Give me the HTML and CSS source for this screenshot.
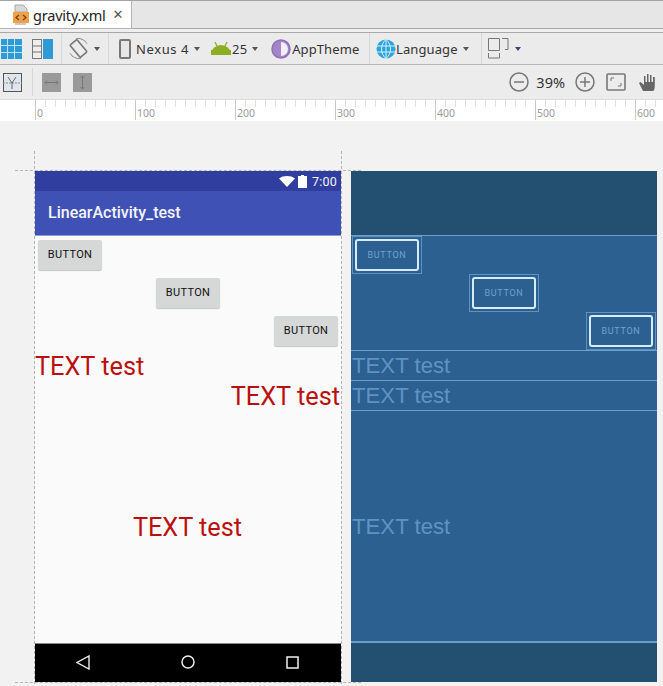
FILE: index.html
```html
<!DOCTYPE html>
<html lang="en">
<head>
<meta charset="utf-8">
<title>gravity.xml</title>
<link rel="stylesheet" href="styles.css">
</head>
<body>
<div class="tabstrip">
  <div class="tab">
    <svg class="ic-file" width="17" height="22" viewBox="0 0 17 22"><path d="M3 1h8l4 4v3H3z" fill="#d8d8d8" stroke="#a8a8a8"/><rect x="1" y="8" width="16" height="11" fill="#eda24a"/><path d="M3 19h11v2H3z" fill="#c9c9c9"/><path d="M7 11l-3 2.500 3 2.500M11 11l3 2.500-3 2.500" fill="none" stroke="#7a3d00" stroke-width="1.200"/></svg>
    <span class="tabname">gravity.xml</span>
    <span class="tabclose">✕</span>
  </div>
</div>
<div class="bar bar1">
  <div class="group g-a">
    <svg width="21" height="20" viewBox="0 0 21 20"><rect width="21" height="20" fill="#2e9bd6"/><path d="M6.500 0v20M13.500 0v20M0 6.500h21M0 13.500h21" stroke="#bfe3f6"/></svg>
    <svg width="21" height="20" viewBox="0 0 21 20"><rect x=".5" y=".5" width="9" height="19" fill="#eee" stroke="#777"/><path d="M0 7h10M0 13h10" stroke="#777"/><rect x="11" width="10" height="20" fill="#2e9bd6"/></svg>
  </div>
  <div class="group g-b">
    <svg width="21" height="21" viewBox="0 0 21 21"><rect x="6" y="2.500" width="9" height="16" rx="1" transform="rotate(-40 10.500 10.500)" fill="#ececec" stroke="#777" stroke-width="1.600"/><path d="M8 .7a10 10 0 0 1 11 5M13 20.300a10 10 0 0 1-11-5" fill="none" stroke="#888"/></svg>
    <i class="caret"></i>
  </div>
  <div class="group g-c">
    <svg width="12" height="20" viewBox="0 0 12 20"><rect x="1" y="1" width="10" height="18" rx="1" fill="#e6e6e6" stroke="#777" stroke-width="2"/></svg>
    <span class="lbl nexus">Nexus 4</span><i class="caret"></i>
    <svg class="droid" width="20" height="13" viewBox="0 0 20 13"><path d="M0 12a10 9 0 0 1 20 0z" fill="#8cae22"/><path d="M4 0l2 4M16 0l-2 4" stroke="#8cae22" stroke-width="1.200"/><rect y="8" width="20" height="5" fill="#8cae22"/></svg>
    <span class="lbl n25">25</span><i class="caret"></i>
    <svg class="theme" width="20" height="20" viewBox="0 0 20 20"><circle cx="10" cy="10" r="9" fill="#a585c9" stroke="#8d72b5" stroke-width="1.500"/><path d="M10 3a7 7 0 0 1 0 14z" fill="#f3eef8"/></svg>
    <span class="lbl">AppTheme</span>
  </div>
  <div class="group g-d">
    <svg width="20" height="20" viewBox="0 0 20 20"><circle cx="10" cy="10" r="9.500" fill="#2ba4dc"/><path d="M0 7h20M0 13h20M10 0v20M10 .5c-6 5-6 14 0 19M10 .5c6 5 6 14 0 19" fill="none" stroke="#d6f0fb"/></svg>
    <span class="lbl">Language</span><i class="caret"></i>
  </div>
  <div class="group g-e">
    <svg width="23" height="21" viewBox="0 0 23 21"><path d="M.5.500h11v12H.5zM14 .5h6v11h-3M.5 15v5h11v-5" fill="none" stroke="#777"/></svg>
    <i class="caret caret-dark"></i>
  </div>
</div>
<div class="bar bar2">
  <div class="tool-left">
    <svg class="t-box" width="19" height="19" viewBox="0 0 19 19"><rect x=".5" y=".5" width="18" height="18" fill="#dfe6ee" stroke="#555"/><path d="M0 10h19" stroke="#888" stroke-dasharray="2 1"/><path d="M5 4l4 6 4-6M9 10v6" fill="none" stroke="#666"/></svg>
    <span class="sep"></span>
    <svg width="19" height="19" viewBox="0 0 19 19"><rect width="19" height="19" fill="#9a9a9a"/><path d="M3 9.500h13M5 7.500l-2 2 2 2M14 7.500l2 2-2 2" fill="none" stroke="#777"/></svg>
    <svg width="19" height="19" viewBox="0 0 19 19"><rect width="19" height="19" fill="#9a9a9a"/><path d="M9.500 3v13M7.500 5l2-2 2 2M7.500 14l2 2 2-2" fill="none" stroke="#777"/></svg>
  </div>
  <div class="tool-right">
    <svg width="20" height="20" viewBox="0 0 20 20"><circle cx="10" cy="10" r="9" fill="none" stroke="#777" stroke-width="1.500"/><path d="M5 10h10" stroke="#777" stroke-width="1.500"/></svg>
    <span class="zoom">39%</span>
    <svg width="20" height="20" viewBox="0 0 20 20"><circle cx="10" cy="10" r="9" fill="none" stroke="#777" stroke-width="1.500"/><path d="M5 10h10M10 5v10" stroke="#777" stroke-width="1.500"/></svg>
    <svg class="t-fit" width="20" height="18" viewBox="0 0 20 18"><rect x="1" y="1" width="18" height="16" rx="1" fill="none" stroke="#777" stroke-width="1.600"/><path d="M5 8V5h3M15 10v3h-3" fill="none" stroke="#777"/></svg>
    <svg class="t-hand" width="18" height="19" viewBox="0 0 18 19"><path d="M4 18L0 10l1.500-1L5 12V3h1.500v6H8V1h1.500v8H11V2h1.500v7H14V4h1.800v9c0 3-1 5-2 5z" fill="#666"/></svg>
  </div>
</div>
<div class="ruler">
  <span class="mark">0</span><span class="mark">100</span><span class="mark">200</span><span class="mark">300</span><span class="mark">400</span><span class="mark">500</span><span class="mark">600</span>
</div>
<main class="canvas">
  <section class="device">
    <div class="status">
      <svg width="16" height="11" viewBox="0 0 16 11"><path d="M0 2.500C4-.8 12-.8 16 2.500L8 11z" fill="#fff"/></svg>
      <svg width="9" height="13" viewBox="0 0 9 13"><path d="M3 0h3v1h3v12H0V1h3z" fill="#fff"/></svg>
      <span class="time">7:00</span>
    </div>
    <div class="appbar">LinearActivity_test</div>
    <div class="content">
      <div class="buttons">
        <button class="btn b-left">BUTTON</button>
        <button class="btn b-mid">BUTTON</button>
        <button class="btn b-right">BUTTON</button>
      </div>
      <div class="txt t-left">TEXT test</div>
      <div class="txt t-right">TEXT test</div>
      <div class="txt t-center">TEXT test</div>
    </div>
    <div class="navbar">
      <svg width="14" height="15" viewBox="0 0 14 15"><path d="M13 1v13L1 7.500z" fill="none" stroke="#eee" stroke-width="1.400"/></svg>
      <svg width="14" height="14" viewBox="0 0 14 14"><circle cx="7" cy="7" r="6" fill="none" stroke="#eee" stroke-width="1.500"/></svg>
      <svg width="13" height="13" viewBox="0 0 13 13"><rect x="1" y="1" width="11" height="11" fill="none" stroke="#eee" stroke-width="1.500"/></svg>
    </div>
  </section>
  <section class="device blueprint">
    <div class="bp-top"></div>
    <div class="bp-content">
      <div class="bp-buttons">
        <div class="bp-slot s-left"><div class="bp-btn">BUTTON</div></div>
        <div class="bp-slot s-mid"><div class="bp-btn">BUTTON</div></div>
        <div class="bp-slot s-right"><div class="bp-btn">BUTTON</div></div>
      </div>
      <div class="bp-txt">TEXT test</div>
      <div class="bp-txt">TEXT test</div>
      <div class="bp-txt bp-fill">TEXT test</div>
    </div>
    <div class="bp-bottom"></div>
  </section>
</main>
</body>
</html>
```
FILE: styles.css
```css
* { box-sizing: border-box; }
html, body { margin: 0; padding: 0; }
body {
  width: 663px;
  height: 686px;
  overflow: hidden;
  background: #f2f2f2;
  font-family: "Noto Sans", sans-serif;
  color: #333;
  display: flex;
  flex-direction: column;
}
svg { display: block; flex: none; }

.tabstrip {
  height: 33px;
  background: #e6e6e6;
  border-top: 1px solid #a3a3a3;
  border-bottom: 1px solid #a8a8a8;
  box-shadow: inset 0 -3px 0 #efefef, inset 0 -4px 0 #a8a8a8;
}
.tab {
  width: 132px;
  height: 28px;
  background: #fff;
  border-right: 1px solid #b4b4b4;
  border-bottom: 1px solid #b4b4b4;
  display: flex;
  align-items: center;
  padding-left: 12px;
}
.tabname { font-size: 14.500px; margin-left: 4px; color: #222; letter-spacing: -.2px; }
.tabclose { font-size: 13px; margin-left: 7px; color: #555; font-family: "DejaVu Sans", sans-serif; }

.bar { display: flex; background: #ececec; }
.bar1 { height: 32px; border-bottom: 1px solid #b8b8b8; background: #ebebeb; }
.group { display: flex; align-items: center; height: 100%; border-right: 1px solid #d8d8d8; }
.g-a { width: 62px; padding-left: 1px; gap: 10px; }
.g-b { width: 47px; padding-left: 6px; gap: 5px; }
.g-c { width: 261px; padding-left: 10px; }
.g-d { width: 112px; padding-left: 6px; }
.g-e { border-right: 0; padding-left: 6px; gap: 4px; }
.lbl { font-size: 13px; color: #333; letter-spacing: .1px; white-space: nowrap; }
.nexus { margin-left: 5px; letter-spacing: .6px; }
.n25 { margin-left: 1px; }
.droid { margin-left: 11px; }
.theme { margin-left: 13px; margin-right: 1px; }
.caret {
  width: 0;
  height: 0;
  margin-left: 5px;
  border: 3.500px solid transparent;
  border-top: 4px solid #555;
  border-bottom: 0;
}
.g-b .caret, .g-e .caret { margin-left: 0; }
.caret-dark { border-top-color: #45417a; }

.bar2 {
  height: 35px;
  justify-content: space-between;
  align-items: center;
  border-bottom: 1px solid #dcdcdc;
}
.tool-left { display: flex; align-items: center; gap: 12px; padding-left: 3px; }
.sep { width: 1px; height: 28px; background: #d6d6d6; margin-right: -3px; margin-left: -2px; }
.tool-right { display: flex; align-items: center; padding-right: 6px; }
.zoom { font-size: 14.500px; margin: 0 10px 0 7px; color: #333; }
.t-fit { margin-left: 11px; }
.t-hand { margin-left: 13px; }

.ruler {
  height: 21px;
  overflow: hidden;
  background-color: #fff;
  background-image:
    repeating-linear-gradient(90deg, #c9c9c9 0 1px, transparent 1px 100px),
    repeating-linear-gradient(90deg, #e0e0e0 0 1px, transparent 1px 10px);
  background-position: 35px 0, 35px 0;
  background-size: 100% 20px, 100% 7px;
  background-repeat: no-repeat;
  display: flex;
  padding-left: 37px;
  align-items: flex-end;
}
.mark {
  width: 100px;
  font-size: 10.500px;
  line-height: 13px;
  padding-bottom: 1px;
  color: #9a9a9a;
  flex: none;
}

.canvas {
  flex: 1;
  min-height: 0;
  display: flex;
  gap: 10px;
  padding: 50px 0 4px 35px;
  background: #f2f2f2;
  font-family: Roboto, sans-serif;
}
.device { width: 306px; display: flex; flex-direction: column; position: relative; }
.device:not(.blueprint)::before {
  content: "";
  position: absolute;
  left: -1px;
  right: -1px;
  top: -20px;
  bottom: -2px;
  border-left: 1px dashed #b4b4b4;
  border-right: 1px dashed #b4b4b4;
  pointer-events: none;
  z-index: 1;
}
.device:not(.blueprint)::after {
  content: "";
  position: absolute;
  left: -20px;
  right: -20px;
  top: -1px;
  bottom: -1px;
  border-top: 1px dashed #b4b4b4;
  border-bottom: 1px dashed #b4b4b4;
  pointer-events: none;
}
.status {
  height: 20px;
  background: #303f9f;
  display: flex;
  align-items: center;
  justify-content: flex-end;
  gap: 3px;
  padding-right: 4px;
}
.time { font-size: 12.500px; color: #f3f3f3; margin-left: 2px; letter-spacing: .2px; }
.appbar {
  height: 45px;
  background: #3f51b5;
  border-bottom: 1px solid #8c9ad8;
  color: #f4f4f8;
  font-size: 16px;
  font-weight: 500;
  line-height: 44px;
  padding-left: 13px;
}
.content { flex: 1; background: #fafafa; display: flex; flex-direction: column; }
.buttons { height: 115px; display: flex; flex-direction: column; }
.btn {
  width: 64px;
  height: 30px;
  margin: 4px 3px;
  padding: 0 0 1px;
  background: #d6d7d7;
  border: 0;
  border-radius: 2px;
  box-shadow: 0 1px 1px #c4c4c4;
  color: #111;
  font: 400 11px Roboto, sans-serif;
  letter-spacing: .35px;
}
.b-left { align-self: flex-start; }
.b-mid { align-self: center; }
.b-right { align-self: flex-end; }
.txt { height: 30px; font-size: 25.300px; line-height: 30px; color: #bb1010; white-space: nowrap; padding: 1px 1px 0 0; }
.t-right { text-align: right; }
.t-center { flex: 1; height: auto; display: flex; align-items: center; justify-content: center; padding-top: 2px; }
.navbar {
  height: 39px;
  background: #000;
  border-top: 1px solid #8a8a8a;
  display: flex;
  align-items: center;
  justify-content: space-between;
  padding: 0 42px 2px 41px;
}

.blueprint { background: #235070; }
.bp-top { height: 65px; border-bottom: 1px solid #6c9ecb; }
.bp-bottom { height: 41px; border-top: 2px solid #6c9ecb; }
.bp-content { flex: 1; background: #2c6090; display: flex; flex-direction: column; }
.bp-buttons { height: 114px; display: flex; flex-direction: column; }
.bp-slot {
  width: 70px;
  height: 38px;
  padding: 2px;
  border: 1px solid #5f92c0;
}
.s-left { align-self: flex-start; margin-left: 1px; }
.s-mid { align-self: center; }
.s-right { align-self: flex-end; margin-right: 1px; }
.bp-btn {
  height: 100%;
  border: 2px solid #d6ecfa;
  border-radius: 3px;
  color: #6ea2d0;
  font-size: 9px;
  letter-spacing: .7px;
  display: flex;
  align-items: center;
  justify-content: center;
}
.bp-txt {
  height: 30px;
  border-top: 1px solid #6c9ecb;
  font-family: "Liberation Sans", sans-serif;
  font-size: 22.200px;
  line-height: 29px;
  color: #5f93c3;
  padding-left: 1px;
}
.bp-fill { flex: 1; height: auto; display: flex; align-items: center; }
```
